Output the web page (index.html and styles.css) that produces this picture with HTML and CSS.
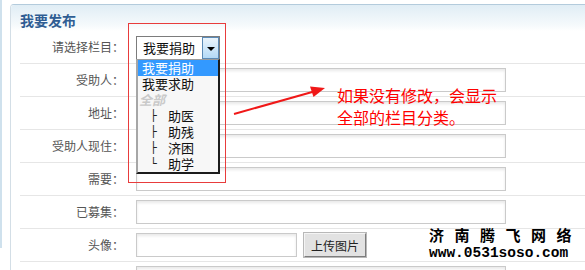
FILE: index.html
```html
<!DOCTYPE html>
<html lang="zh-CN">
<head>
<meta charset="utf-8">
<title>我要发布</title>
<link rel="stylesheet" href="styles.css">
</head>
<body>
<div class="page">
  <div class="strip"></div>
  <div class="panel">
    <div class="head"><h2 class="title">我要发布</h2></div>
    <div class="form">
      <div class="row">
        <div class="label">请选择栏目：</div>
        <div class="field">
          <div class="select">
            <span class="select-text">我要捐助</span>
            <span class="select-btn"><span class="caret"></span></span>
          </div>
        </div>
      </div>
      <div class="row">
        <div class="label">受助人：</div>
        <div class="field"><input class="input" type="text"></div>
      </div>
      <div class="row">
        <div class="label">地址：</div>
        <div class="field"><input class="input" type="text"></div>
      </div>
      <div class="row">
        <div class="label">受助人现住：</div>
        <div class="field"><input class="input" type="text"></div>
      </div>
      <div class="row">
        <div class="label">需要：</div>
        <div class="field"><input class="input" type="text"></div>
      </div>
      <div class="row">
        <div class="label">已募集：</div>
        <div class="field"><input class="input" type="text"></div>
      </div>
      <div class="row">
        <div class="label">头像：</div>
        <div class="field field-upload">
          <input class="input input-short" type="text">
          <button class="upload" type="button">上传图片</button>
        </div>
      </div>
      <div class="row">
        <div class="label"></div>
        <div class="field"><input class="input" type="text"></div>
      </div>
    </div>
  </div>

  <div class="redbox"></div>
  <ul class="dropdown">
    <li class="opt opt-active">我要捐助</li>
    <li class="opt">我要求助</li>
    <li class="opt opt-group">全部</li>
    <li class="opt"><span class="tree">├</span>助医</li>
    <li class="opt"><span class="tree">├</span>助残</li>
    <li class="opt"><span class="tree">├</span>济困</li>
    <li class="opt"><span class="tree">└</span>助学</li>
  </ul>

  <svg class="arrow" width="585" height="270" viewBox="0 0 585 270">
    <line x1="234" y1="114" x2="314" y2="91.5" stroke="#f01818" stroke-width="2"/>
    <polygon points="325,88 310,86.5 313.5,97" fill="#f01818"/>
  </svg>

  <p class="note">如果没有修改，会显示<br>全部的栏目分类。</p>

  <div class="mark">
    <div class="mark-cn">济南腾飞网络</div>
    <div class="mark-en">www.0531soso.com</div>
  </div>
</div>
</body>
</html>
```

FILE: styles.css
```css
html, body {
  margin: 0;
  padding: 0;
}
body {
  width: 585px;
  height: 270px;
  overflow: hidden;
  background: #fff;
  font-family: "Noto Sans CJK SC", "Noto Sans", sans-serif;
}
.page {
  position: relative;
  display: flex;
  align-items: flex-start;
  width: 585px;
  height: 270px;
  overflow: hidden;
}
.strip {
  flex: none;
  width: 2px;
  height: 248px;
  background: #cfe1ed;
}
.panel {
  flex: none;
  width: 640px;
  height: 300px;
  margin-left: 8px;
  margin-top: 4px;
  border: 1px solid #d3dee6;
  border-top-color: #b3cbdc;
  border-radius: 4px 4px 0 0;
}
.head {
  height: 26px;
  padding-left: 9px;
  background: linear-gradient(#e0edf5, #f6fafc 80%, #fff);
  border-radius: 4px 4px 0 0;
}
.title {
  margin: 0;
  padding-top: 5px;
  font-size: 14px;
  line-height: 20px;
  font-weight: bold;
  color: #2f5d93;
}
.form {
  padding-left: 9px;
}
.row {
  display: grid;
  grid-template-columns: 104px auto;
  column-gap: 12px;
  align-items: center;
  height: 32px;
  border-bottom: 1px solid #e6e6e6;
}
.label {
  text-align: right;
  font-size: 12px;
  color: #555;
  line-height: 16px;
}
.field {
  display: flex;
  align-items: center;
}
.input {
  box-sizing: border-box;
  width: 370px;
  height: 24px;
  margin: 0;
  padding: 0 4px;
  border: 1px solid #cacaca;
  box-shadow: inset 0 2px 3px rgba(0, 0, 0, 0.09);
  background: #fff;
  font: 12px "Noto Sans CJK SC", sans-serif;
}
.field-upload {
  gap: 7px;
}
.input-short {
  width: 161px;
}
.upload {
  box-sizing: border-box;
  width: 62px;
  height: 24px;
  margin: 0;
  padding: 0;
  font: 12px "Noto Sans CJK SC", sans-serif;
  color: #222;
  background: #e2e2e2;
  border: 1px solid;
  border-color: #f4f4f4 #7d7d7d #7d7d7d #f4f4f4;
  box-shadow: 0 0 0 1px #b8b8b8;
}
.select {
  box-sizing: border-box;
  display: flex;
  width: 84px;
  height: 24px;
  margin-top: 2px;
  border: 1px solid #7c7c7c;
  background: #fff;
}
.select-text {
  flex: 1;
  padding-left: 6px;
  font-size: 13px;
  line-height: 22px;
  color: #111;
}
.select-btn {
  box-sizing: border-box;
  display: flex;
  align-items: center;
  justify-content: center;
  width: 17px;
  height: 22px;
  border: 1px solid #5b8ab6;
  background: linear-gradient(#eaf4fc, #b4daf7);
}
.caret {
  width: 0;
  height: 0;
  border-left: 4px solid transparent;
  border-right: 4px solid transparent;
  border-top: 4px solid #000;
  margin-top: 1px;
}
.redbox {
  position: absolute;
  left: 128px;
  top: 23px;
  width: 96px;
  height: 158px;
  border: 1px solid #e83c3c;
}
.dropdown {
  position: absolute;
  left: 136px;
  top: 59px;
  box-sizing: border-box;
  width: 84px;
  margin: 0;
  padding: 0;
  list-style: none;
  background: #f7f7f7;
  border-top: 1px solid #9c9c9c;
  border-left: 2px solid #a6a6a6;
  border-right: 2px solid #1c1c1c;
  border-bottom: 2px solid #1c1c1c;
}
.opt {
  height: 16px;
  padding-left: 4px;
  font-size: 13px;
  line-height: 16px;
  color: #111;
  white-space: nowrap;
}
.opt-active {
  background: #3399ff;
  color: #fff;
}
.opt-group {
  padding-left: 1px;
  font-style: italic;
  font-weight: bold;
  color: #c9c9c9;
}
.tree {
  display: inline-block;
  width: 18px;
  margin-left: 8px;
  font-family: "DejaVu Sans Mono", monospace;
  font-size: 11px;
  color: #222;
  vertical-align: top;
}
.arrow {
  position: absolute;
  left: 0;
  top: 0;
  pointer-events: none;
}
.note {
  position: absolute;
  left: 337px;
  top: 84px;
  margin: 0;
  font-size: 16px;
  line-height: 22px;
  color: #ff0000;
  white-space: nowrap;
}
.mark {
  position: absolute;
  left: 429px;
  top: 225px;
  color: #000;
  font-weight: bold;
}
.mark-cn {
  font-size: 15px;
  line-height: 20px;
  letter-spacing: 10.5px;
  white-space: nowrap;
}
.mark-en {
  font-family: "Liberation Mono", monospace;
  font-size: 14.5px;
  line-height: 16px;
  white-space: nowrap;
}
```
